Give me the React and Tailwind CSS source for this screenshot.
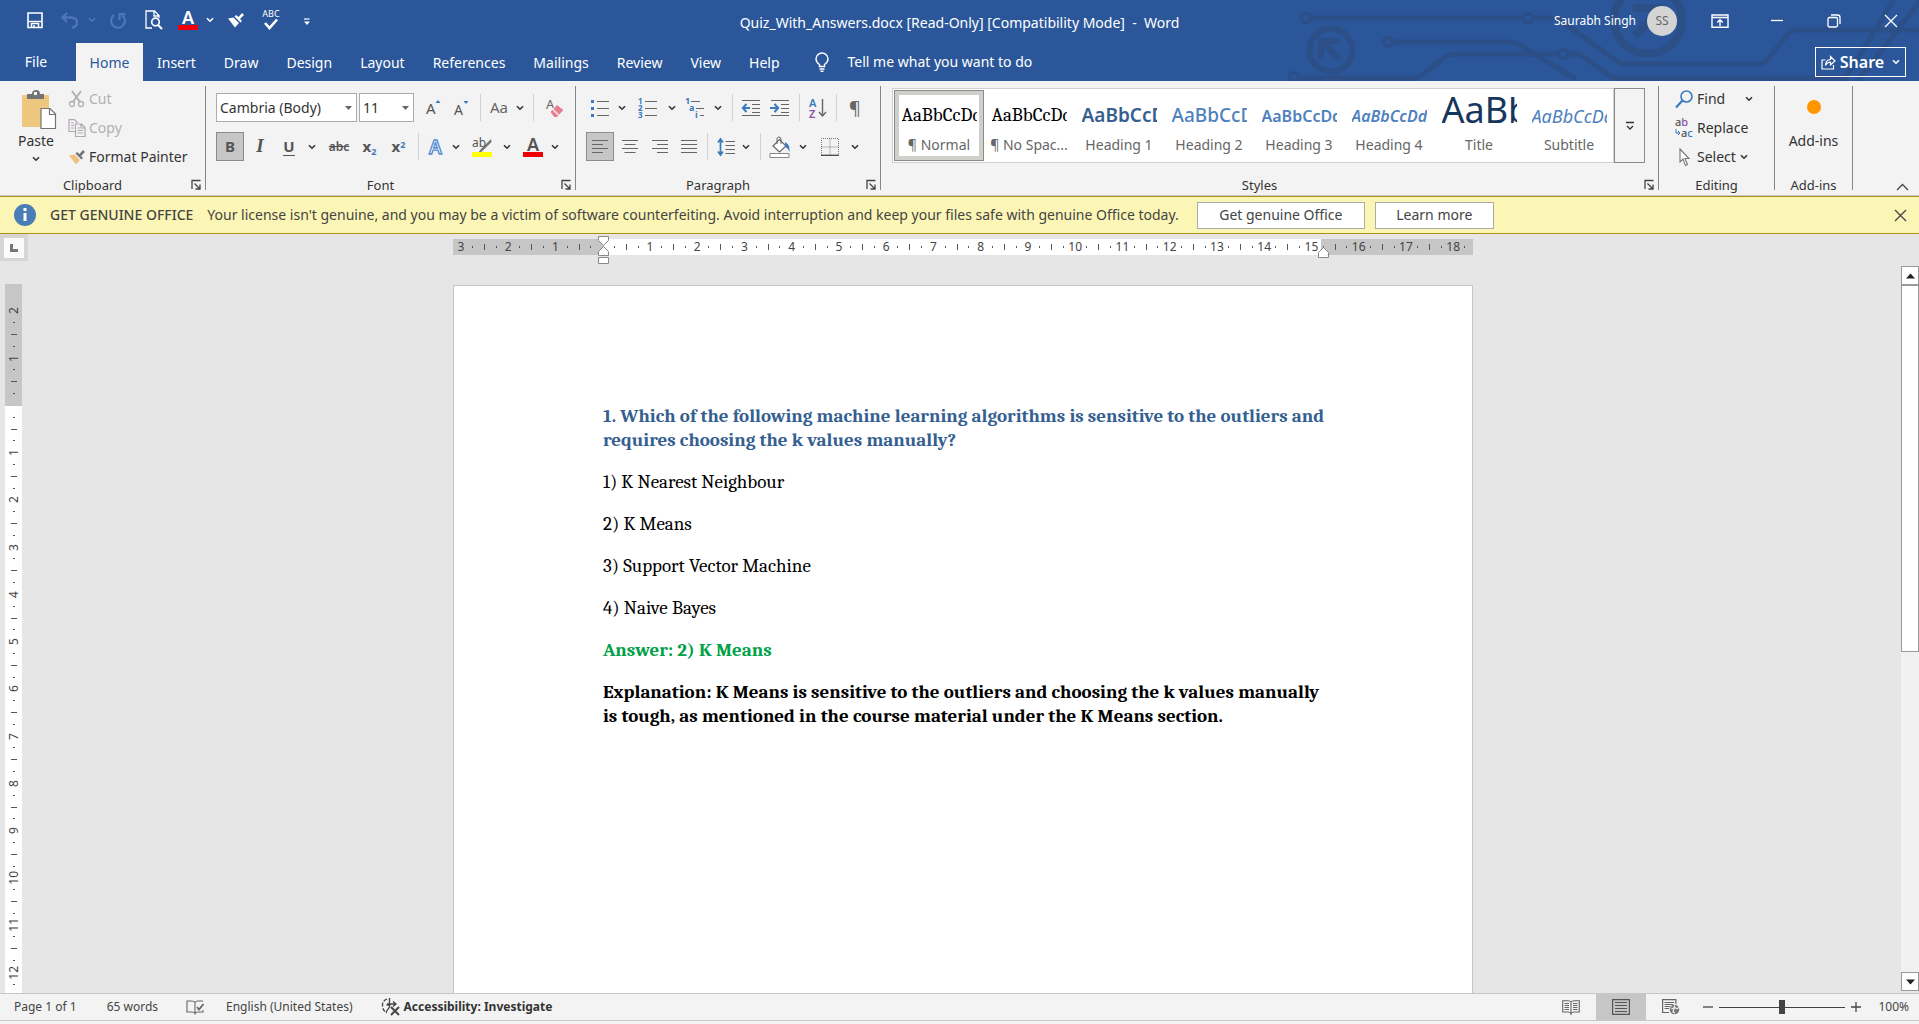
import React from "react";

const SANS = "font-['Noto_Sans','Open_Sans',sans-serif]";
const SERIF = "font-['Caladea','Cambria','Liberation_Serif',serif]";

function Icon({ w = 20, h = 20, className = "", children }) {
  return (
    <svg width={w} height={h} viewBox={`0 0 ${w} ${h}`} fill="none" className={`shrink-0 overflow-visible ${className}`} aria-hidden="true">
      {children}
    </svg>
  );
}

const Chevron = ({ className = "text-[#333]" }) => (
  <Icon w={8} h={6} className={className}>
    <path d="M1 1.2 4 4.2 7 1.2" stroke="currentColor" strokeWidth="1.6" />
  </Icon>
);

function Tool({ label, w = "w-7", active = false, children, className = "" }) {
  return (
    <button
      type="button"
      aria-label={label}
      className={`flex shrink-0 items-center justify-center ${w} h-[29px] ${active ? "border border-[#8a8a8a] bg-[#c6c6c6]" : ""} ${className}`}
    >
      {children}
    </button>
  );
}

const Sep = () => <span className="mx-1 h-[27px] w-px shrink-0 bg-[#d0d0d0]" />;

function Launcher({ label }) {
  return (
    <button type="button" aria-label={label} className="absolute right-1 bottom-[5px]">
      <Icon w={10} h={10}>
        <path d="M1 9V.5h8.5M3.5 3.5 8.5 8.5M9 4.5V9H4.5" stroke="#444" strokeWidth="1.3" />
      </Icon>
    </button>
  );
}

function Group({ title, width, launcher, children }) {
  return (
    <section className={`flex ${width}`} aria-label={title}>
      <div className="relative flex min-w-0 flex-1 flex-col">
        <div className="flex-1">{children}</div>
        <div className={`h-5 text-center text-[13px] leading-5 text-[#333] ${launcher ? "pr-5" : ""}`}>{title}</div>
        {launcher && <Launcher label={`${title} settings`} />}
      </div>
      <div className="mt-[5px] mb-[5px] w-px bg-[#868686]" />
    </section>
  );
}

/* ---------- Title bar ---------- */

const TEXTURE = "#2b4f86";

function HeaderTexture() {
  return (
    <svg width="640" height="81" viewBox="1279 0 640 81" fill="none" stroke={TEXTURE} strokeWidth="5" className="pointer-events-none absolute top-0 right-0" aria-hidden="true">
      <circle cx="1306" cy="18" r="4.5" strokeWidth="3.5" />
      <path d="M1311 18H1522M1534 18h16q8 0 14 5l50 36q7 5 10 5h136q4 0 7-4l21-26q3-4 8-4h123" />
      <circle cx="1528" cy="18" r="4.5" strokeWidth="3.5" />
      <circle cx="1388" cy="42" r="4.5" strokeWidth="3.5" />
      <path d="M1393 42h117q6 0 14 6l52 31" />
      <circle cx="1294" cy="77" r="4.5" strokeWidth="3.5" />
      <path d="M1299 78h119l26-20q5-4 10-4h104" />
      <circle cx="1563" cy="54" r="4.5" strokeWidth="3.5" />
      <path d="M1568 54h6q7 0 14 6l18 13q5 5 11 5h226" />
      <circle cx="1331" cy="50" r="21.5" strokeWidth="6" />
      <path d="M1321 59V41h18M1322 42l18 17" strokeWidth="6" />
      <circle cx="1648" cy="20" r="34" strokeWidth="8" />
      <path d="M1633 8h28v22M1660 9l-25 27" strokeWidth="8" />
      <path d="M1896-4 1843 82M1924-4 1857 82" />
    </svg>
  );
}

function TitleBar() {
  return (
    <div className="relative grid h-[43px] grid-cols-[1fr_auto_1fr] text-white">
      <div className="flex items-center pb-1 pl-6">
        <button type="button" aria-label="Save" className="flex w-[22px] justify-center">
          <Icon w={18} h={18}>
            <path d="M2 2h14v14.5H2z" stroke="#fff" strokeWidth="1.6" />
            <path d="M2 10.5h14" stroke="#fff" strokeWidth="1.4" />
            <path d="M5.5 16.500v-4h7v4M8 14v3" stroke="#fff" strokeWidth="1.5" />
          </Icon>
        </button>
        <button type="button" aria-label="Undo" className="ml-3 flex w-6 justify-center">
          <Icon w={20} h={18}>
            <path d="M7 2 2.500 6.500 7 11M3 6.500h8.500q6 .5 5.500 5.500-.5 3.500-5 5" stroke="#4d77b8" strokeWidth="2.300" />
          </Icon>
        </button>
        <button type="button" aria-label="Undo history" className="flex w-5 justify-center"><Chevron className="text-[#4d77b8]" /></button>
        <button type="button" aria-label="Repeat" className="ml-1 flex w-6 justify-center">
          <Icon w={18} h={18}>
            <path d="M5 4A7 7 0 1 0 13 4M10.500 9V3h6" stroke="#4d77b8" strokeWidth="2.200" />
          </Icon>
        </button>
        <button type="button" aria-label="Print Preview" className="ml-3 flex w-6 justify-center">
          <Icon w={20} h={20}>
            <path d="M8 18H2V1h8.500L15 5.500V8M10 1v5h5" stroke="#fff" strokeWidth="1.300" />
            <circle cx="11.500" cy="12" r="3.800" stroke="#fff" strokeWidth="1.700" />
            <path d="m14 15 4 4" stroke="#fff" strokeWidth="2.200" />
          </Icon>
        </button>
        <button type="button" aria-label="Font Color" className="ml-3 flex w-5 flex-col items-center">
          <span className="text-lg leading-[15px] font-semibold">A</span>
          <span className="h-[5px] w-5 bg-[#f00000]" />
        </button>
        <button type="button" aria-label="Font Color options" className="ml-1 flex w-4 justify-center"><Chevron className="text-white" /></button>
        <button type="button" aria-label="Format Painter" className="ml-1.5 flex w-6 justify-center">
          <BrushIcon tip="#fff" handle="#fff" />
        </button>
        <button type="button" aria-label="Spelling" className="ml-[11px] flex w-6 flex-col items-center">
          <span className="text-[9px] leading-[9px]">ABC</span>
          <Icon w={16} h={12}><path d="m2 5 4.500 5L14 1.500" stroke="#fff" strokeWidth="2.600" /></Icon>
        </button>
        <button type="button" aria-label="Customize Quick Access Toolbar" className="ml-4 flex w-4 justify-center pt-1">
          <Icon w={8} h={8}><path d="M1 1h5.500" stroke="#fff" strokeWidth="1.200" /><path d="M1 3.500h6L4 7z" fill="#fff" /></Icon>
        </button>
      </div>
      <div className="self-center pt-[2px] text-sm whitespace-pre">Quiz_With_Answers.docx [Read-Only] [Compatibility Mode]  -  Word</div>
      <div className="flex items-center justify-end pb-[2px] text-xs">
        <span>Saurabh Singh</span>
        <span className="ml-[11px] flex size-[30px] items-center justify-center rounded-full bg-[#d4d4d4] text-xs text-[#666]">SS</span>
        <button type="button" aria-label="Ribbon Display Options" className="ml-[14px] flex w-[57px] justify-center">
          <Icon w={18} h={14}>
            <path d="M1 1h16v12.300H1zM1 3.500h16" stroke="#fff" strokeWidth="1.400" />
            <path d="M9 12V6M6.200 8.500 9 5.800l2.800 2.700" stroke="#fff" strokeWidth="1.400" />
          </Icon>
        </button>
        <button type="button" aria-label="Minimize" className="flex w-[57px] justify-center">
          <Icon w={14} h={14}><path d="M1 6.500h12" stroke="#fff" strokeWidth="1.300" /></Icon>
        </button>
        <button type="button" aria-label="Restore" className="flex w-[57px] justify-center">
          <Icon w={14} h={14}>
            <rect x="1" y="3.500" width="9.500" height="9.500" rx="1.500" stroke="#fff" strokeWidth="1.300" />
            <path d="M4 1h6.500Q13 1 13 3.500V10" stroke="#fff" strokeWidth="1.300" />
          </Icon>
        </button>
        <button type="button" aria-label="Close" className="flex w-[57px] justify-center">
          <Icon w={14} h={14}><path d="m1 1 12 12M13 1 1 13" stroke="#fff" strokeWidth="1.300" /></Icon>
        </button>
      </div>
    </div>
  );
}

const TABS = ["Insert", "Draw", "Design", "Layout", "References", "Mailings", "Review", "View", "Help"];

function TabBar() {
  return (
    <nav className="relative flex h-[38px] items-stretch text-sm text-white">
      <button type="button" className="w-[76px] pr-1">File</button>
      <button type="button" className="w-[67px] bg-[#f3f3f3] pt-[2px] text-[#2b579a]">Home</button>
      {TABS.map((t) => (
        <button type="button" key={t} className="px-[14px] pt-[2px]">{t}</button>
      ))}
      <button type="button" className="ml-[20px] flex items-center gap-[18px]">
        <Icon w={16} h={20}>
          <path d="M5.500 14.500V12.500Q2 10 2 7A6 6 0 0 1 14 7Q14 10 10.500 12.500V14.500zM5.500 17h5M6.500 19.200h3" stroke="#fff" strokeWidth="1.400" />
        </Icon>
        Tell me what you want to do
      </button>
      <button type="button" className="mt-1 mr-[13px] mb-1 ml-auto flex w-[91px] items-center justify-center gap-1 border border-white text-base font-semibold">
        <Icon w={15} h={15}>
          <path d="M4.500 5H1v9h11.500v-4" stroke="#fff" strokeWidth="1.200" />
          <path d="M4.500 10.500Q4.500 5 9.500 4.500V1.500L14 6 9.500 10V7.200Q6 7.200 4.500 10.500z" stroke="#fff" strokeWidth="1.200" />
        </Icon>
        Share
        <Chevron className="ml-1 text-white" />
      </button>
    </nav>
  );
}

/* ---------- Ribbon ---------- */

function BrushIcon({ tip = "#ecc17b", handle = "#737373" }) {
  return (
    <Icon w={18} h={16}>
      <path d="M1 6.500 6.500 5.500 12 11 8 15.500Z" fill={tip} />
      <path d="m7.500 4.500 6 6 1.500-1.500-2-2 4-4L15 1l-3.500 4L9 3z" fill={handle} />
    </Icon>
  );
}

function ClipboardGroup() {
  return (
    <Group title="Clipboard" width="w-[206px]" launcher>
      <div className="flex pt-[3px]">
        <button type="button" className="flex w-[72px] flex-col items-center pt-1.5 text-sm leading-5 text-[#333]">
          <Icon w={36} h={40} className="ml-1">
            <rect x="2" y="5" width="27" height="32" rx="1" fill="#eec77f" />
            <path d="M7 4h5q0-4 4-4t4 4h4v5H7z" fill="#737373" />
            <rect x="14" y="2" width="3" height="3" fill="#f3f3f3" />
            <path d="M21 18.500h9l5.500 5.500v14.500H21z" fill="#fff" stroke="#737373" strokeWidth="1.200" />
            <path d="M29.500 18.500V24.500h6" stroke="#737373" strokeWidth="1.200" />
          </Icon>
          <span className="mt-[1px]">Paste</span>
          <span className="flex h-4 items-center"><Chevron /></span>
        </button>
        <div className="flex flex-col text-sm">
          <button type="button" className="flex h-[29px] items-center text-[#b1b1b1]">
            <Icon w={18} h={18} className="-ml-1 mr-[3px]">
              <path d="M4 1 12 12M13 1 5 12" stroke="#b1b1b1" strokeWidth="2" />
              <circle cx="4" cy="14" r="2.500" stroke="#b1b1b1" strokeWidth="1.300" />
              <circle cx="13" cy="14" r="2.500" stroke="#b1b1b1" strokeWidth="1.300" />
            </Icon>
            Cut
          </button>
          <button type="button" className="flex h-[29px] items-center text-[#b1b1b1]">
            <Icon w={18} h={18} className="-ml-1 mr-[3px]">
              <path d="M7 12.500H1V.7h5.500L9.500 4" stroke="#b1a8b1" strokeWidth="1.200" />
              <path d="M7.500 5h6L17 8.500v9H7.500zM13 5v4h4" stroke="#b1a8b1" strokeWidth="1.200" />
              <path d="M3 4h3M3 6.500h3M3 9h3M9.500 9H12M9.500 11.500H15M9.500 14H15" stroke="#b1a8b1" />
            </Icon>
            Copy
          </button>
          <button type="button" className="flex h-[29px] items-center text-[#333]">
            <span className="-ml-1 mr-[3px]"><BrushIcon /></span>
            Format Painter
          </button>
        </div>
      </div>
    </Group>
  );
}

function Combo({ label, value, width }) {
  return (
    <label className={`relative block ${width}`}>
      <select aria-label={label} defaultValue={value} className="h-[29px] w-full appearance-none border border-[#ababab] bg-white pl-[3px] text-sm text-[#333]">
        <option>{value}</option>
      </select>
      <Icon w={7} h={4} className="pointer-events-none absolute top-[13px] right-[5px]">
        <path d="M0 0h7L3.500 4z" fill="#666" />
      </Icon>
    </label>
  );
}

function FontGroup() {
  return (
    <Group title="Font" width="w-[370px]" launcher>
      <div className="flex items-center pt-3 pl-[10px]">
        <Combo label="Font" value="Cambria (Body)" width="w-[141px]" />
        <Combo label="Font Size" value="11" width="ml-[2px] w-[55px]" />
        <Tool label="Increase Font Size" className="ml-1.5">
          <Icon w={16} h={18}><text x="0" y="15" fontSize="15" fill="#555">A</text><path d="M9.500 4h5L12 1z" fill="#3a7abf" /></Icon>
        </Tool>
        <Tool label="Decrease Font Size">
          <Icon w={16} h={18}><text x="0" y="16" fontSize="14" fill="#555">A</text><path d="M9.500 2h5L12 5z" fill="#3a7abf" /></Icon>
        </Tool>
        <Sep />
        <Tool label="Change Case" w="w-11" className="gap-2 text-[15px] text-[#666]">Aa <Chevron /></Tool>
        <Sep />
        <Tool label="Clear All Formatting" className="ml-1">
          <Icon w={20} h={20}>
            <text x="0" y="11" fontSize="13" fill="#666">A</text>
            <path d="M4 14 11 6.500 18 12l-7 7.500H8z" fill="#e87e92" stroke="#f3f3f3" />
            <path d="m6.500 11 6 6" stroke="#f3f3f3" strokeWidth="1.200" />
          </Icon>
        </Tool>
      </div>
      <div className="flex items-center pt-[10px] pl-[10px] text-[#555]">
        <Tool label="Bold" active><b className="text-[15px]">B</b></Tool>
        <Tool label="Italic" w="w-8"><i className="font-['Liberation_Serif',serif] text-[19px] font-bold">I</i></Tool>
        <Tool label="Underline" w="w-[26px]"><span className="border-b border-[#555] text-[15px] leading-[17px] font-bold">U</span></Tool>
        <Tool label="Underline style" w="w-5"><Chevron /></Tool>
        <Tool label="Strikethrough" w="w-[34px]"><span className="text-xs font-semibold line-through">abc</span></Tool>
        <Tool label="Subscript" w="w-[27px]"><span className="text-[15px] font-bold">x<sub className="text-[9px] text-[#3a7abf]">2</sub></span></Tool>
        <Tool label="Superscript" w="w-[31px]"><span className="text-[15px] font-bold">x<sup className="text-[9px] text-[#3a7abf]">2</sup></span></Tool>
        <Sep />
        <Tool label="Text Effects" w="w-[27px]">
          <Icon w={18} h={20}><text x="1" y="17" fontSize="19" fontWeight="600" fill="#fff" stroke="#4f8bd0" strokeWidth="1.300">A</text></Icon>
        </Tool>
        <Tool label="Text Effects options" w="w-3"><Chevron /></Tool>
        <Tool label="Text Highlight Color" w="w-[39px]">
          <Icon w={20} h={20}>
            <text x="0" y="10" fontSize="12" fill="#555">ab</text>
            <path d="M19 2 9 12l-3 4 4-1.500L19.500 5z" fill="#737373" />
            <path d="M0 15h20v5H0z" fill="#ff0" />
          </Icon>
        </Tool>
        <Tool label="Highlight options" w="w-3"><Chevron /></Tool>
        <Tool label="Font Color" w="w-9">
          <span className="ml-1 flex flex-col items-center">
            <span className="text-lg leading-[15px] font-semibold">A</span>
            <span className="h-[5px] w-5 bg-[#f00000]" />
          </span>
        </Tool>
        <Tool label="Font Color options" w="w-3"><Chevron /></Tool>
      </div>
    </Group>
  );
}

const LINE = "#666";
const BLUE = "#3a7abf";

function AlignIcon({ kind }) {
  const d = {
    left: "M1 1.500h16M1 5.500h11M1 9.500h16M1 13.500h11",
    center: "M1 1.500h16M3.500 5.500h11M1 9.500h16M3.500 13.500h11",
    right: "M1 1.500h16M6 5.500h11M1 9.500h16M6 13.500h11",
    justify: "M1 1.500h16M1 5.500h16M1 9.500h16M1 13.500h16",
  }[kind];
  return <Icon w={18} h={15}><path d={d} stroke={LINE} strokeWidth="1.200" /></Icon>;
}

function ParagraphGroup() {
  return (
    <Group title="Paragraph" width="w-[305px]" launcher>
      <div className="flex items-center pt-3 pl-[10px]">
        <Tool label="Bullets">
          <Icon w={18} h={18}><path d="M6 2.500h12M6 9.500h12M6 16.500h12" stroke={LINE} strokeWidth="1.200" /><path d="M0 1h3v3H0zM0 8h3v3H0zM0 15h3v3H0z" fill={BLUE} /></Icon>
        </Tool>
        <Tool label="Bullets options" w="w-4"><Chevron /></Tool>
        <Tool label="Numbering" w="w-9">
          <Icon w={20} h={20}>
            <path d="M7 3.500h12M7 10.500h12M7 17.500h12" stroke={LINE} strokeWidth="1.200" />
            <text fontSize="8" fontWeight="700" fill={BLUE}><tspan x="0" y="6">1</tspan><tspan x="0" y="13">2</tspan><tspan x="0" y="20">3</tspan></text>
          </Icon>
        </Tool>
        <Tool label="Numbering options" w="w-3"><Chevron /></Tool>
        <Tool label="Multilevel List" w="w-[34px]">
          <Icon w={20} h={20}>
            <path d="M6 3.500h9M11 10.500h8M15 17.500h4" stroke={LINE} strokeWidth="1.200" />
            <text fontSize="9" fontWeight="700" fill={BLUE}><tspan x="0" y="6">1</tspan><tspan x="4" y="13">a</tspan><tspan x="10" y="20">i</tspan></text>
          </Icon>
        </Tool>
        <Tool label="Multilevel options" w="w-3"><Chevron /></Tool>
        <span className="w-1" />
        <Sep />
        <Tool label="Decrease Indent">
          <Icon w={20} h={18}><path d="M1 1.500h18M11 5.500h8M11 9.500h8M11 13.500h8M1 16.500h18" stroke={LINE} strokeWidth="1.200" /><path d="M9 9H2M5.500 5 1.800 9l3.700 4" stroke={BLUE} strokeWidth="2" /></Icon>
        </Tool>
        <Tool label="Increase Indent" w="w-[30px]">
          <Icon w={20} h={18}><path d="M1 1.500h18M11 5.500h8M11 9.500h8M11 13.500h8M1 16.500h18" stroke={LINE} strokeWidth="1.200" /><path d="M0 9h7M4.500 5l3.700 4-3.700 4" stroke={BLUE} strokeWidth="2" /></Icon>
        </Tool>
        <Sep />
        <Tool label="Sort">
          <Icon w={20} h={22}>
            <text x="1" y="10" fontSize="11" fontWeight="600" fill={BLUE}>A</text>
            <text x="1" y="21" fontSize="11" fontWeight="600" fill="#8e4fa8">Z</text>
            <path d="M14.500 2v17M11 15l3.500 4 3.500-4" stroke={LINE} strokeWidth="1.400" />
          </Icon>
        </Tool>
        <Sep />
        <Tool label="Show Formatting Marks"><span className="text-lg text-[#666]">¶</span></Tool>
      </div>
      <div className="flex items-center pt-[10px] pl-[10px]">
        <Tool label="Align Left" active><AlignIcon kind="left" /></Tool>
        <Tool label="Center" w="w-[31px]"><AlignIcon kind="center" /></Tool>
        <Tool label="Align Right" w="w-[30px]"><AlignIcon kind="right" /></Tool>
        <Tool label="Justify" w="w-7"><AlignIcon kind="justify" /></Tool>
        <Sep />
        <Tool label="Line Spacing">
          <Icon w={18} h={20}><path d="M8.500 4.500H18M8.500 8.500H18M8.500 12.500H18M8.500 16.500H18" stroke={LINE} strokeWidth="1.200" /><path d="M3.500 2.500v15M1 5.500 3.500 2 6 5.500M1 14.500 3.500 18 6 14.500" stroke={BLUE} strokeWidth="1.700" /></Icon>
        </Tool>
        <Tool label="Line Spacing options" w="w-3"><Chevron /></Tool>
        <span className="w-1" />
        <Sep />
        <Tool label="Shading" w="w-[30px]">
          <Icon w={22} h={22}>
            <path d="M4 10 10.500 3.500 17 10l-6.500 6z" fill="#fff" stroke="#666" strokeWidth="1.200" />
            <path d="M8 8V3Q8 1 10 1t2 2v5" stroke="#666" />
            <path d="M16 6q5 2 4.500 10-1.500-4-4-5z" fill={BLUE} />
            <path d="M1 17.500h19v4H1z" fill="#fff" stroke="#888" />
          </Icon>
        </Tool>
        <Tool label="Shading options" w="w-4"><Chevron /></Tool>
        <Tool label="Borders" w="w-[38px]">
          <Icon w={18} h={18}><path d="M.5 17V.5h17V17M9 .5V17M.5 9h17" stroke="#777" strokeDasharray="1 1" /><path d="M0 17.300h18" stroke="#444" strokeWidth="1.300" /></Icon>
        </Tool>
        <Tool label="Borders options" w="w-3"><Chevron /></Tool>
      </div>
    </Group>
  );
}

const STYLES = [
  { name: "¶ Normal", sample: `${SERIF} text-[19px]` },
  { name: "¶ No Spac...", sample: `${SERIF} text-[19px]` },
  { name: "Heading 1", sample: "text-[19px] font-semibold text-[#365f91]" },
  { name: "Heading 2", sample: "text-[19px] font-medium text-[#4f81bd]" },
  { name: "Heading 3", sample: "text-base font-semibold text-[#4f81bd]" },
  { name: "Heading 4", sample: "text-base font-semibold italic text-[#4f81bd]" },
  { name: "Title", sample: "pb-3 text-4xl text-[#17365d]" },
  { name: "Subtitle", sample: "text-lg italic text-[#4f81bd]" },
];

function StylesGroup() {
  return (
    <Group title="Styles" width="min-w-0 flex-1" launcher>
      <div className="mt-[7px] mr-[13px] ml-[11px] flex h-[75px]">
        <div className="flex min-w-0 flex-1 overflow-hidden border border-[#d0d0d0] bg-white p-px">
          {STYLES.map((s, i) => (
            <button
              type="button"
              key={s.name}
              className={`flex w-[90px] shrink-0 flex-col items-center ${i === 0 ? "border border-[#8a8a86] p-1 ring-4 ring-[#cfcfcb] ring-inset" : "p-[5px]"}`}
            >
              <span className={`mt-[2px] flex h-[38px] w-[75px] items-center overflow-hidden whitespace-nowrap ${s.sample}`}>AaBbCcDdEe</span>
              <span className="text-sm leading-[22px] whitespace-nowrap text-[#666]">{s.name}</span>
            </button>
          ))}
        </div>
        <button type="button" aria-label="More styles" className="flex w-[31px] shrink-0 items-center justify-center border border-[#8a8a8a]">
          <Icon w={10} h={10}><path d="M1 1.500h8M2 5l3 3 3-3" stroke="#333" strokeWidth="1.300" /></Icon>
        </button>
      </div>
    </Group>
  );
}

function EditingGroup() {
  return (
    <Group title="Editing" width="w-[116px]">
      <div className="flex flex-col pt-[3px] pl-4 text-sm text-[#333]">
        <button type="button" className="flex h-[29px] items-center">
          <Icon w={18} h={18} className="mr-1"><circle cx="11.500" cy="6.500" r="5.500" stroke={BLUE} strokeWidth="1.600" /><path d="m7.500 10.500-6.500 7" stroke={BLUE} strokeWidth="2.200" /></Icon>
          Find
          <span className="ml-5"><Chevron /></span>
        </button>
        <button type="button" className="flex h-[29px] items-center">
          <Icon w={18} h={20} className="mr-1">
            <text x="0" y="8" fontSize="11" fontWeight="500" fill="#555">a<tspan fill="#8e4fa8">b</tspan></text>
            <text x="6" y="19" fontSize="11" fontWeight="500" fill="#555">a<tspan fill={BLUE}>c</tspan></text>
            <path d="M1 11v4h4M3 13l2 2-2 2" stroke={BLUE} />
          </Icon>
          Replace
        </button>
        <button type="button" className="flex h-[29px] items-center">
          <Icon w={18} h={18} className="mr-1"><path d="M5 1v13l3-3 2.500 6.500 2-1L10 10.500h4z" fill="#fff" stroke="#777" strokeWidth="1.100" /></Icon>
          Select
          <span className="ml-1"><Chevron /></span>
        </button>
      </div>
    </Group>
  );
}

function Ribbon() {
  return (
    <div className="flex h-[115px] border-b border-[#c8c8c8] bg-[#f3f3f3]">
      <ClipboardGroup />
      <FontGroup />
      <ParagraphGroup />
      <StylesGroup />
      <EditingGroup />
      <section aria-label="Add-ins" className="flex w-[78px]">
        <button type="button" className="flex flex-1 flex-col items-center text-[#333]">
          <span className="mt-[19px] size-[14px] rounded-full bg-[#ff9500]" />
          <span className="mt-[17px] text-sm leading-5">Add-ins</span>
          <span className="mt-auto text-[13px] leading-5">Add-ins</span>
        </button>
        <div className="my-[5px] w-px bg-[#868686]" />
      </section>
      <div className="flex w-[66px] items-end justify-end pr-[10px] pb-1">
        <button type="button" aria-label="Collapse the Ribbon">
          <Icon w={13} h={8}><path d="m1 7 5.500-5.500L12 7" stroke="#444" strokeWidth="1.300" /></Icon>
        </button>
      </div>
    </div>
  );
}

function LicenseBar() {
  return (
    <div role="alert" className="flex h-[38px] items-center border-y border-[#b18e16] bg-[#fcf6b6] pr-3 pl-[14px] text-sm text-[#444]">
      <Icon w={22} h={22}>
        <circle cx="11" cy="11" r="11" fill="#4a7db5" />
        <path d="M11 4v3M11 9v8" stroke="#fff" strokeWidth="3" />
      </Icon>
      <span className="ml-[14px] font-medium whitespace-nowrap">GET GENUINE OFFICE</span>
      <span className="ml-[14px] whitespace-nowrap">Your license isn't genuine, and you may be a victim of software counterfeiting. Avoid interruption and keep your files safe with genuine Office today.</span>
      <button type="button" className="ml-[18px] h-[27px] w-[168px] border border-[#ababab] bg-white leading-5">Get genuine Office</button>
      <button type="button" className="ml-[10px] h-[27px] w-[119px] border border-[#ababab] bg-white leading-5">Learn more</button>
      <button type="button" aria-label="Close message" className="ml-auto">
        <Icon w={13} h={13}><path d="m1 1 11 11M12 1 1 12" stroke="#444" strokeWidth="1.300" /></Icon>
      </button>
    </div>
  );
}

/* ---------- Rulers: one cell per quarter centimetre ---------- */

function quarterCells(from, count) {
  return Array.from({ length: count }, (_, i) => from + i);
}

function HorizontalRuler() {
  return (
    <div className="relative flex h-4 w-[1020px] bg-[linear-gradient(to_right,#c6c6c6_0_151px,#fff_151px_868px,#c6c6c6_868px)] px-[2px] text-xs text-[#444]">
      {quarterCells(-12, 86).map((q) => (
        <span key={q} className="flex min-w-0 flex-1 items-center justify-center">
          {q === 0 ? null : q % 4 === 0 ? (
            <span className="leading-4">{Math.abs(q / 4)}</span>
          ) : q % 2 === 0 ? (
            <span className="h-1.5 w-px shrink-0 bg-[#555]" />
          ) : (
            <span className="h-[2px] w-px shrink-0 bg-[#555]" />
          )}
        </span>
      ))}
      <Icon w={11} h={28} className="absolute -top-[3px] left-[145px]">
        <path d="M.5.5h10v4l-5 5-5-5zM.5 19.500v-4l5-5 5 5v4zM.5 21.500h10v6H.5z" fill="#fff" stroke="#888" />
      </Icon>
      <Icon w={11} h={11} className="absolute top-[8px] left-[865px]">
        <path d="M.5 10.500v-5l5-5 5 5v5z" fill="#fff" stroke="#888" />
      </Icon>
    </div>
  );
}

function VerticalRuler() {
  return (
    <div className="ml-[5px] h-full w-[17px] overflow-hidden bg-[linear-gradient(to_bottom,#c6c6c6_0_122px,#fff_122px)] pt-[21px] text-xs text-[#444]">
      <div className="flex h-[685px] flex-col">
        {quarterCells(-8, 58).map((q) => (
          <span key={q} className="flex min-h-0 flex-1 items-center justify-center">
            {q === 0 ? null : q % 4 === 0 ? (
              <span className="rotate-180 leading-4 [writing-mode:vertical-rl]">{Math.abs(q / 4)}</span>
            ) : q % 2 === 0 ? (
              <span className="h-px w-1.5 shrink-0 bg-[#555]" />
            ) : (
              <span className="h-px w-[2px] shrink-0 bg-[#555]" />
            )}
          </span>
        ))}
      </div>
    </div>
  );
}

const OPTIONS = ["1) K Nearest Neighbour", "2) K Means", "3) Support Vector Machine", "4) Naive Bayes"];

function Page() {
  return (
    <article className={`mt-[30px] flex w-[1020px] flex-1 flex-col gap-[18px] border border-b-0 border-[#c6c6c6] bg-white pt-[118px] pr-[140px] pl-[149px] text-[19px] leading-6 text-black ${SERIF}`}>
      <h1 className="font-bold text-[#365f91]">1. Which of the following machine learning algorithms is sensitive to the outliers and requires choosing the k values manually?</h1>
      {OPTIONS.map((o) => <p key={o}>{o}</p>)}
      <p className="font-bold text-[#00a249]">Answer: 2) K Means</p>
      <p className="font-bold">Explanation: K Means is sensitive to the outliers and choosing the k values manually is tough, as mentioned in the course material under the K Means section.</p>
    </article>
  );
}

function Workspace() {
  return (
    <main className="flex min-h-0 flex-1 bg-[#e6e6e6]">
      <div className="flex w-7 flex-col">
        <button type="button" aria-label="Tab selector" className="mb-[23px] flex h-[27px] shrink-0 items-center justify-center bg-[#d6d6d6]">
          <span className="flex size-5 items-center justify-center bg-[#fbfbfb]">
            <Icon w={8} h={8}><path d="M1.500 0v6.500H8" stroke="#777" strokeWidth="3" /></Icon>
          </span>
        </button>
        <div className="min-h-0 flex-1"><VerticalRuler /></div>
      </div>
      <div className="flex min-w-0 flex-1 flex-col items-center overflow-hidden pt-[5px] pr-[3px]">
        <HorizontalRuler />
        <Page />
      </div>
      <div className="mt-8 mb-[2px] flex w-[18px] flex-col bg-[#f1f1f1]">
        <button type="button" aria-label="Scroll up" className="flex h-[19px] items-center justify-center border border-[#999] bg-white">
          <Icon w={9} h={6}><path d="M0 5.500h9L4.500.5z" fill="#222" /></Icon>
        </button>
        <div className="h-[367px] border border-[#999] bg-white" />
        <button type="button" aria-label="Scroll down" className="mt-auto flex h-[19px] items-center justify-center border border-[#999] bg-white">
          <Icon w={9} h={6}><path d="M0 .5h9L4.500 5.500z" fill="#222" /></Icon>
        </button>
      </div>
    </main>
  );
}

function StatusBar() {
  return (
    <footer className="h-[31px] border-t border-[#c6c6c6] bg-[#f5f2f2] text-xs text-[#444]">
      <div className="flex h-[27px] items-center border-b border-[#c6c6c6] bg-[#f3f3f3] pr-[10px] pl-[14px]">
        <button type="button">Page 1 of 1</button>
        <button type="button" className="ml-[30px]">65 words</button>
        <button type="button" aria-label="Proofing" className="ml-7">
          <Icon w={18} h={15}>
            <path d="M9 2.500Q8 1 6 1H1v11h5q2 0 3 1.500V2.500Q10 1 12 1h5M9 13.500q1-1.500 3-1.500h5v-2" stroke="#666" strokeWidth="1.100" />
            <path d="m11 7 2 2.500L17.500 4" stroke="#666" strokeWidth="1.800" />
          </Icon>
        </button>
        <button type="button" className="ml-[22px]">English (United States)</button>
        <button type="button" className="ml-7 flex items-center gap-[3px] font-bold text-[#333]">
          <Icon w={20} h={20}>
            <path d="M6 2Q1 4 1.500 9T6 16" stroke="#444" strokeWidth="1.300" strokeDasharray="4 1.500" />
            <path d="M8.500 1v9L5 15M6 7h9M12 4.500 15 7l-3 2.500M5.500 8h4" stroke="#444" strokeWidth="1.300" />
            <path d="m10 10 8 8M18 10l-8 8" stroke="#444" strokeWidth="2" />
          </Icon>
          Accessibility: Investigate
        </button>
        <button type="button" aria-label="Read Mode" className="ml-auto flex h-full w-[50px] items-center justify-center">
          <Icon w={18} h={15}>
            <path d="M9 2Q8 .7 6 .7H.7V12H6q2 0 3 1.500Q10 12 12 12h5.300V.7H12Q10 .7 9 2v13" stroke="#666" strokeWidth="1.100" />
            <path d="M2.500 3.500H7M2.500 5.500H7M2.500 7.500H7M2.500 9.500H7M11 3.500h4.500M11 5.500h4.500M11 7.500h4.500M11 9.500h4.500" stroke="#666" />
          </Icon>
        </button>
        <button type="button" aria-label="Print Layout" className="flex h-full w-[50px] items-center justify-center bg-[#c6c6c6]">
          <Icon w={18} h={16}>
            <path d="M.6.600h16.800v14.800H.6z" stroke="#555" strokeWidth="1.200" />
            <path d="M3 3.500h12M3 6.500h12M3 9.500h12M3 12.500h12" stroke="#555" strokeWidth="1.100" />
          </Icon>
        </button>
        <button type="button" aria-label="Web Layout" className="flex h-full w-[50px] items-center justify-center">
          <Icon w={18} h={16}>
            <path d="M7 13.500H.6V.6h13.300V5" stroke="#666" strokeWidth="1.200" />
            <path d="M2.500 3.500H12M2.500 5.500H11M2.500 7.500H8M2.500 9.500H7" stroke="#666" />
            <circle cx="12.500" cy="10.500" r="4.800" fill="#777" />
            <path d="M9 9l3 1-1 3 2 1M13 6.500l-1 2 3 1 2-1" stroke="#f3f3f3" strokeWidth="1.200" />
          </Icon>
        </button>
        <button type="button" aria-label="Zoom Out" className="ml-[6px]"><Icon w={12} h={12}><path d="M1 6h10" stroke="#444" strokeWidth="1.300" /></Icon></button>
        <input
          type="range"
          aria-label="Zoom"
          min="10"
          max="190"
          defaultValue="100"
          className="mx-[5px] h-4 w-[126px] appearance-none bg-transparent [&::-webkit-slider-runnable-track]:h-px [&::-webkit-slider-runnable-track]:bg-[#444] [&::-webkit-slider-thumb]:-mt-[7px] [&::-webkit-slider-thumb]:h-[14px] [&::-webkit-slider-thumb]:w-[6px] [&::-webkit-slider-thumb]:appearance-none [&::-webkit-slider-thumb]:bg-[#444]"
        />
        <button type="button" aria-label="Zoom In"><Icon w={12} h={12}><path d="M1 6h10M6 1v10" stroke="#444" strokeWidth="1.300" /></Icon></button>
        <button type="button" className="ml-4">100%</button>
      </div>
    </footer>
  );
}

export default function App() {
  return (
    <div className={`flex h-screen flex-col overflow-hidden ${SANS}`}>
      <header className="relative bg-[#2b579a]">
        <HeaderTexture />
        <TitleBar />
        <TabBar />
      </header>
      <Ribbon />
      <LicenseBar />
      <Workspace />
      <StatusBar />
    </div>
  );
}
